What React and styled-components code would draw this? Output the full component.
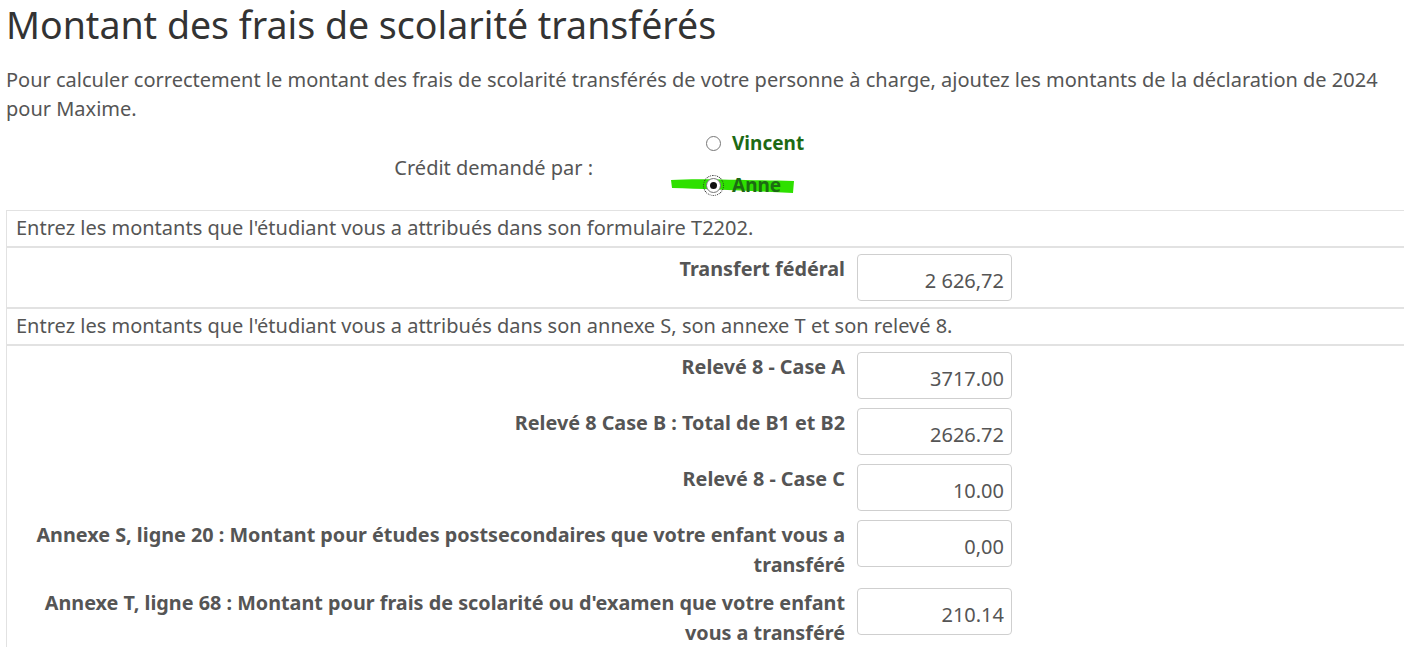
import React from "react";
import styled, { createGlobalStyle } from "styled-components";

const GlobalStyle = createGlobalStyle`
  html, body {
    margin: 0;
    padding: 0;
    background: #fff;
    overflow: hidden;
  }
  body {
    font-family: "Noto Sans", "Lato", sans-serif;
    color: #555;
  }
`;

const Page = styled.div`
  padding: 0 0 0 6px;
  width: 1398px;
`;

const Title = styled.h1`
  margin: 0;
  padding-top: 2px;
  font-size: 37.5px;
  line-height: 46px;
  font-weight: 400;
  color: #333;
`;

const Intro = styled.p`
  margin: 17px 0 0 0;
  font-size: 20px;
  line-height: 29px;
  color: #555;
`;

const CreditRow = styled.div`
  display: grid;
  grid-template-columns: 587px auto;
  column-gap: 113px;
  align-items: center;
  margin-top: 2px;
  height: 85px;
`;

const CreditLabel = styled.div`
  text-align: right;
  font-size: 20px;
  color: #555;
`;

const RadioList = styled.div`
  position: relative;
  display: flex;
  flex-direction: column;
  gap: 14px;
  margin-bottom: 7px;
`;

const Highlight = styled.svg`
  position: absolute;
  left: -38px;
  top: 43px;
  width: 130px;
  height: 24px;
  pointer-events: none;
`;

const RadioOption = styled.label`
  position: relative;
  display: flex;
  align-items: center;
  gap: 11px;
  font-size: 19px;
  font-weight: 700;
  color: #1d6a14;
  height: 28px;
`;

const RadioDot = styled.span`
  width: 13px;
  height: 13px;
  border-radius: 50%;
  border: 1px solid #777;
  background: #fff;
  display: inline-flex;
  align-items: center;
  justify-content: center;
  outline: ${(p) => (p.$focused ? "1px dotted #222" : "none")};
  outline-offset: 2px;
  &::after {
    content: "";
    width: 7px;
    height: 7px;
    border-radius: 50%;
    background: ${(p) => (p.$checked ? "#111" : "transparent")};
  }
`;

const Table = styled.div`
  border-top: 1px solid #e2e2e2;
  border-left: 1px solid #e2e2e2;
`;

const SectionHeader = styled.div`
  padding: 4px 10px 5px 9px;
  font-size: 20px;
  line-height: 26px;
  color: #555;
  border-bottom: 2px solid #e2e2e2;
`;

const Section = styled.div`
  padding: 6px 0 0 0;
  border-bottom: ${(p) => (p.$last ? "none" : "2px solid #e2e2e2")};
`;

const Field = styled.div`
  display: grid;
  grid-template-columns: 1fr 155px 380px;
  column-gap: 12px;
  padding-left: 14px;
  margin-bottom: 9px;
  &:last-child {
    margin-bottom: 6px;
  }
`;

const FieldLabel = styled.label`
  text-align: right;
  font-size: 19.8px;
  line-height: 29.5px;
  font-weight: 700;
  color: #555;
`;

const Amount = styled.input`
  box-sizing: border-box;
  width: 155px;
  height: 47px;
  border: 1px solid #cfcfcf;
  border-radius: 4px;
  padding: 5px 7px 0 7px;
  text-align: right;
  font-family: inherit;
  font-size: 20px;
  color: #555;
  background: #fff;
  outline: none;
`;

const federal = [{ label: "Transfert fédéral", value: "2 626,72" }];

const releve = [
  { label: "Relevé 8 - Case A", value: "3717.00" },
  { label: "Relevé 8 Case B : Total de B1 et B2", value: "2626.72" },
  { label: "Relevé 8 - Case C", value: "10.00" },
  {
    label:
      "Annexe S, ligne 20 : Montant pour études postsecondaires que votre enfant vous a transféré",
    value: "0,00",
  },
  {
    label:
      "Annexe T, ligne 68 : Montant pour frais de scolarité ou d'examen que votre enfant vous a transféré",
    value: "210.14",
  },
];

function FieldRow({ label, value }) {
  return (
    <Field>
      <FieldLabel>{label}</FieldLabel>
      <Amount type="text" defaultValue={value} />
      <span />
    </Field>
  );
}

export default function App() {
  return (
    <>
      <GlobalStyle />
      <Page>
        <Title>Montant des frais de scolarité transférés</Title>
        <Intro>
          Pour calculer correctement le montant des frais de scolarité
          transférés de votre personne à charge, ajoutez les montants de la
          déclaration de 2024 pour Maxime.
        </Intro>
        <CreditRow>
          <CreditLabel>Crédit demandé par :</CreditLabel>
          <RadioList>
            <Highlight viewBox="0 0 130 24">
              <path
                d="M3 8 C 30 6, 70 8, 126 9 L 125 21 C 80 19, 40 17, 4 16 Z"
                fill="#2ee000"
              />
            </Highlight>
            <RadioOption>
              <RadioDot />
              Vincent
            </RadioOption>
            <RadioOption>
              <RadioDot $checked $focused />
              Anne
            </RadioOption>
          </RadioList>
        </CreditRow>
        <Table>
          <SectionHeader>
            Entrez les montants que l'étudiant vous a attribués dans son
            formulaire T2202.
          </SectionHeader>
          <Section>
            {federal.map((f) => (
              <FieldRow key={f.label} {...f} />
            ))}
          </Section>
          <SectionHeader>
            Entrez les montants que l'étudiant vous a attribués dans son annexe
            S, son annexe T et son relevé 8.
          </SectionHeader>
          <Section $last>
            {releve.map((f) => (
              <FieldRow key={f.label} {...f} />
            ))}
          </Section>
        </Table>
      </Page>
    </>
  );
}
